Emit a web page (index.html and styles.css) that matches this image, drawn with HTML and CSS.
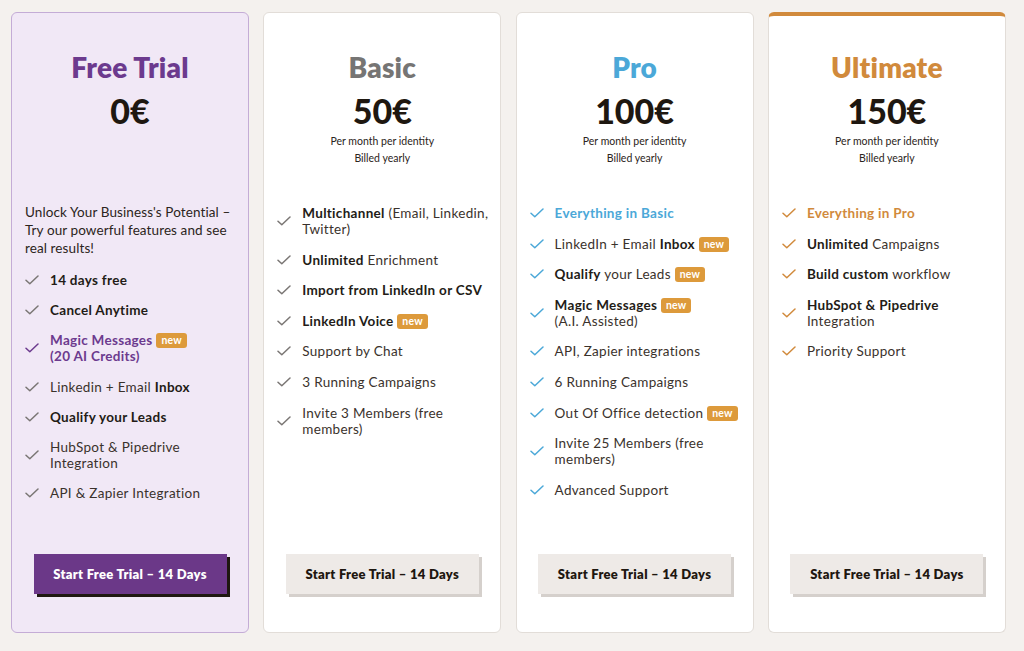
FILE: index.html
```html
<!DOCTYPE html>
<html lang="en">
<head>
<meta charset="utf-8">
<link rel="stylesheet" href="styles.css">
</head>
<body>
<svg width="0" height="0" class="defs">
  <defs>
    <symbol id="chk" viewBox="0 0 14 10"><path d="M1 5.2 L4.8 8.8 L13 1" fill="none" stroke="currentColor" stroke-width="1.5" stroke-linecap="round" stroke-linejoin="round"/></symbol>
  </defs>
</svg>
<main class="plans">
  <section class="card card-free">
    <header class="head">
      <h2 class="title t-free">Free Trial</h2>
      <div class="price">0€</div>
    </header>
    <p class="desc">Unlock Your Business's Potential – Try our powerful features and see real results!</p>
    <ul class="features">
      <li><svg class="ck"><use href="#chk"/></svg><span><b>14 days free</b></span></li>
      <li><svg class="ck"><use href="#chk"/></svg><span><b>Cancel Anytime</b></span></li>
      <li class="hl-free"><svg class="ck"><use href="#chk"/></svg><span><b>Magic Messages</b> <em class="new">new</em><br><b>(20 AI Credits)</b></span></li>
      <li><svg class="ck"><use href="#chk"/></svg><span>Linkedin + Email <b>Inbox</b></span></li>
      <li><svg class="ck"><use href="#chk"/></svg><span><b>Qualify your Leads</b></span></li>
      <li><svg class="ck"><use href="#chk"/></svg><span>HubSpot &amp; Pipedrive<br>Integration</span></li>
      <li><svg class="ck"><use href="#chk"/></svg><span>API &amp; Zapier Integration</span></li>
    </ul>
    <a class="btn btn-free">Start Free Trial – 14 Days</a>
  </section>

  <section class="card">
    <header class="head">
      <h2 class="title t-basic">Basic</h2>
      <div class="price">50€</div>
      <div class="sub">Per month per identity<br>Billed yearly</div>
    </header>
    <ul class="features list-top">
      <li><svg class="ck"><use href="#chk"/></svg><span><b>Multichannel</b> (Email, Linkedin,<br>Twitter)</span></li>
      <li><svg class="ck"><use href="#chk"/></svg><span><b>Unlimited</b> Enrichment</span></li>
      <li><svg class="ck"><use href="#chk"/></svg><span><b>Import from LinkedIn or CSV</b></span></li>
      <li><svg class="ck"><use href="#chk"/></svg><span><b>LinkedIn Voice</b> <em class="new">new</em></span></li>
      <li><svg class="ck"><use href="#chk"/></svg><span>Support by Chat</span></li>
      <li><svg class="ck"><use href="#chk"/></svg><span>3 Running Campaigns</span></li>
      <li><svg class="ck"><use href="#chk"/></svg><span>Invite 3 Members (free<br>members)</span></li>
    </ul>
    <a class="btn">Start Free Trial – 14 Days</a>
  </section>

  <section class="card card-pro">
    <header class="head">
      <h2 class="title t-pro">Pro</h2>
      <div class="price">100€</div>
      <div class="sub">Per month per identity<br>Billed yearly</div>
    </header>
    <ul class="features list-top">
      <li class="hl"><svg class="ck"><use href="#chk"/></svg><span><b>Everything in Basic</b></span></li>
      <li><svg class="ck"><use href="#chk"/></svg><span>LinkedIn + Email <b>Inbox</b> <em class="new">new</em></span></li>
      <li><svg class="ck"><use href="#chk"/></svg><span><b>Qualify</b> your Leads <em class="new">new</em></span></li>
      <li><svg class="ck"><use href="#chk"/></svg><span><b>Magic Messages</b> <em class="new">new</em><br>(A.I. Assisted)</span></li>
      <li><svg class="ck"><use href="#chk"/></svg><span>API, Zapier integrations</span></li>
      <li><svg class="ck"><use href="#chk"/></svg><span>6 Running Campaigns</span></li>
      <li><svg class="ck"><use href="#chk"/></svg><span>Out Of Office detection <em class="new">new</em></span></li>
      <li><svg class="ck"><use href="#chk"/></svg><span>Invite 25 Members (free<br>members)</span></li>
      <li><svg class="ck"><use href="#chk"/></svg><span>Advanced Support</span></li>
    </ul>
    <a class="btn">Start Free Trial – 14 Days</a>
  </section>

  <section class="card card-ult">
    <header class="head">
      <h2 class="title t-ult">Ultimate</h2>
      <div class="price">150€</div>
      <div class="sub">Per month per identity<br>Billed yearly</div>
    </header>
    <ul class="features list-top">
      <li class="hl"><svg class="ck"><use href="#chk"/></svg><span><b>Everything in Pro</b></span></li>
      <li><svg class="ck"><use href="#chk"/></svg><span><b>Unlimited</b> Campaigns</span></li>
      <li><svg class="ck"><use href="#chk"/></svg><span><b>Build custom</b> workflow</span></li>
      <li><svg class="ck"><use href="#chk"/></svg><span><b>HubSpot &amp; Pipedrive</b><br>Integration</span></li>
      <li><svg class="ck"><use href="#chk"/></svg><span>Priority Support</span></li>
    </ul>
    <a class="btn">Start Free Trial – 14 Days</a>
  </section>
</main>
</body>
</html>
```
FILE: styles.css
```css
* { box-sizing: border-box; }
html, body { margin: 0; }
body {
  background: #f4f1ee;
  font-family: "Lato", "Noto Sans", sans-serif;
  color: #2b2420;
  width: 1024px;
  height: 651px;
  overflow: hidden;
}
.defs { position: absolute; }
.plans {
  display: flex;
  gap: 14.3px;
  padding: 12px 11px 0;
}
.card {
  width: 238px;
  height: 621px;
  background: #ffffff;
  border: 1px solid #e2ddd8;
  border-radius: 6px;
  padding: 37px 13px 38px;
  display: flex;
  flex-direction: column;
  flex: none;
}
.card-free {
  background: #f1e8f6;
  border-color: #c4acd6;
}
.card-ult {
  border-top: 4px solid #d18a3c;
  padding-top: 34px;
}
.head {
  height: 153px;
  text-align: center;
  flex: none;
}
.title {
  margin: 0;
  font-size: 28px;
  line-height: 34px;
  font-weight: 800;
  letter-spacing: 0.2px;
}
.t-free { color: #6c3a8e; }
.t-basic { color: #767574; }
.t-pro { color: #4ba8d8; }
.t-ult { color: #d18a3c; }
.price {
  padding-top: 6px;
  font-size: 34px;
  line-height: 41px;
  font-weight: 900;
  color: #1e1710;
}
.sub {
  padding-top: 2px;
  font-size: 10.5px;
  line-height: 17px;
  color: #2b2420;
}
.desc {
  margin: 0 0 15px;
  font-size: 13.5px;
  line-height: 18px;
  letter-spacing: 0.1px;
  color: #2b2420;
}
.features {
  list-style: none;
  margin: 0;
  padding: 0;
  display: flex;
  flex-direction: column;
  gap: 14.6px;
}
.card-free .features { gap: 14.2px; }
.list-top { margin-top: 2px; }
.features li {
  display: flex;
  align-items: center;
  gap: 11px;
  font-size: 13.5px;
  line-height: 16px;
  letter-spacing: 0.3px;
  color: #3a322c;
}
.features li span { white-space: nowrap; }
.features b { font-weight: 700; color: #231c17; }
.ck {
  width: 14px;
  height: 10px;
  flex: none;
  color: #7a7674;
}
.card-pro .ck { color: #4ba8d8; }
.card-ult .ck { color: #d18a3c; }
.card-pro .hl b { color: #4ba8d8; }
.card-ult .hl b { color: #d18a3c; }
.hl-free .ck { color: #6c3a8e; }
.hl-free b { color: #6c3a8e; }
.new {
  font-style: normal;
  display: inline-block;
  background: #dd9a3b;
  color: #fff;
  font-size: 10.5px;
  font-weight: 700;
  line-height: 14px;
  padding: 0 5px 1px;
  border-radius: 3px;
  vertical-align: 1px;
  letter-spacing: 0.2px;
}
.btn {
  margin-top: auto;
  align-self: center;
  width: 193px;
  height: 40px;
  display: flex;
  align-items: center;
  justify-content: center;
  font-size: 13px;
  font-weight: 800;
  letter-spacing: 0.3px;
  color: #1e1710;
  background: #eeeae7;
  box-shadow: 3px 3px 0 #d5d0cc;
}
.btn-free {
  background: #6b3888;
  color: #ffffff;
  box-shadow: 3px 3px 0 #1e1710;
}
```
